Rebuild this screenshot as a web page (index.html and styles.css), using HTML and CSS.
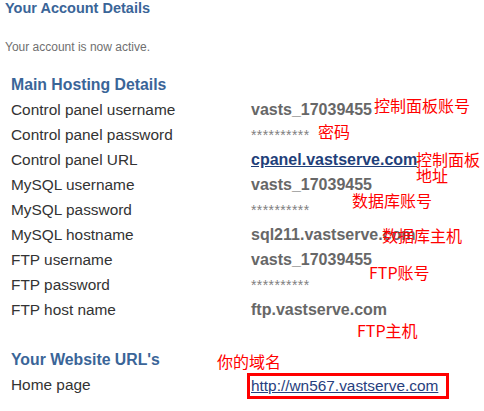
FILE: index.html
```html
<!DOCTYPE html>
<html>
<head>
<meta charset="utf-8">
<link rel="stylesheet" href="styles.css">
</head>
<body>
<div class="page">
  <h1 class="title">Your Account Details</h1>
  <p class="status">Your account is now active.</p>
  <div class="details">
    <h2 class="section">Main Hosting Details</h2>
    <div class="row"><span class="label">Control panel username</span><span class="value">vasts_17039455</span></div>
    <div class="row"><span class="label">Control panel password</span><span class="value stars">**********</span></div>
    <div class="row"><span class="label">Control panel URL</span><a class="value link" href="#">cpanel.vastserve.com</a></div>
    <div class="row"><span class="label">MySQL username</span><span class="value">vasts_17039455</span></div>
    <div class="row"><span class="label">MySQL password</span><span class="value stars">**********</span></div>
    <div class="row"><span class="label">MySQL hostname</span><span class="value">sql211.vastserve.com</span></div>
    <div class="row"><span class="label">FTP username</span><span class="value">vasts_17039455</span></div>
    <div class="row"><span class="label">FTP password</span><span class="value stars">**********</span></div>
    <div class="row"><span class="label">FTP host name</span><span class="value">ftp.vastserve.com</span></div>
    <div class="row spacer"></div>
    <h2 class="section">Your Website URL's</h2>
    <div class="row"><span class="label">Home page</span><span class="boxed"><a class="home-link" href="#">http://wn567.vastserve.com</a></span></div>
  </div>
  <span class="note n1">控制面板账号</span>
  <span class="note n2">密码</span>
  <span class="note n3">控制面板<br>地址</span>
  <span class="note n4">数据库账号</span>
  <span class="note n5">数据库主机</span>
  <span class="note n6">FTP账号</span>
  <span class="note n7">FTP主机</span>
  <span class="note n8">你的域名</span>
</div>
</body>
</html>
```

FILE: styles.css
```css
html, body {
  margin: 0;
  padding: 0;
  background: #ffffff;
}
.page {
  position: relative;
  width: 484px;
  height: 411px;
  overflow: hidden;
  font-family: "Liberation Sans", Arial, sans-serif;
  padding: 0 0 0 5px;
  box-sizing: border-box;
}
.title {
  margin: 0;
  padding-top: 0;
  font-size: 14.5px;
  line-height: 16px;
  font-weight: bold;
  color: #3a6598;
}
.status {
  margin: 23px 0 0 0;
  font-size: 12px;
  line-height: 16px;
  color: #6f6f6f;
}
.details {
  padding-left: 6px;
  margin-top: 17px;
}
.section {
  margin: 0;
  font-size: 15.8px;
  line-height: 25px;
  font-weight: bold;
  color: #3a6598;
}
.row {
  display: flex;
  height: 25px;
  align-items: center;
  font-size: 15.4px;
}
.label {
  width: 240px;
  color: #333333;
}
.value {
  font-size: 16px;
  font-weight: bold;
  color: #676767;
}
.stars {
  font-size: 14px;
  font-weight: normal;
  color: #808080;
  letter-spacing: 0.4px;
}
.link {
  color: #1f3f7a;
  text-decoration: underline;
}
.boxed {
  margin-left: -4px;
  margin-top: 2px;
  border: 3px solid #ff0000;
  padding: 1px 8px 1px 1px;
  line-height: 18px;
}
.home-link {
  color: #27407e;
  text-decoration: underline;
}
.note {
  position: absolute;
  color: #ff0000;
  font-family: "Noto Sans CJK SC", sans-serif;
  font-size: 16px;
  line-height: 16px;
  white-space: nowrap;
}
.n1 { left: 374px; top: 97px; }
.n2 { left: 318px; top: 123px; }
.n3 { left: 416px; top: 151px; }
.n4 { left: 352px; top: 192px; }
.n5 { left: 382px; top: 227px; }
.n6 { left: 369px; top: 264px; }
.n7 { left: 357px; top: 322px; }
.n8 { left: 217px; top: 353px; }
```
